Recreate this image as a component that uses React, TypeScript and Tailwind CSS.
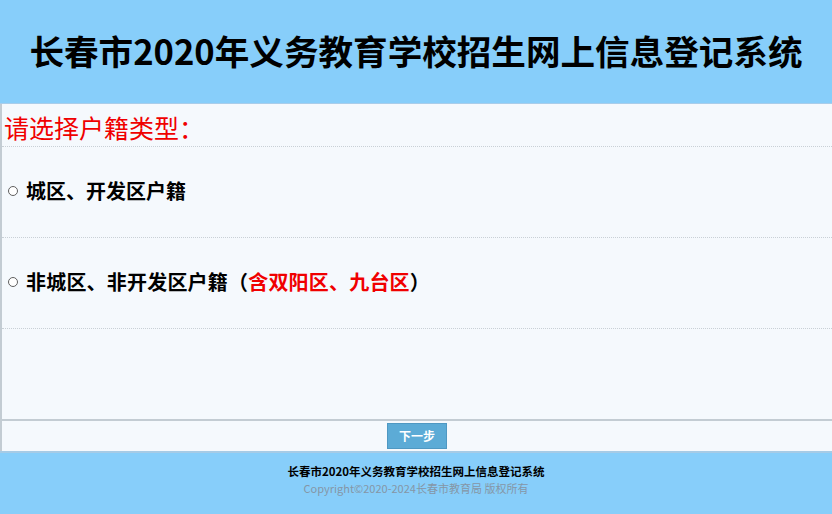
import React from 'react'

const font = { fontFamily: '"Noto Sans CJK SC", "Noto Sans", sans-serif' }

const Radio = () => <span className="inline-block h-[10px] w-[10px] shrink-0 rounded-full border border-[#5f5f5f] bg-white" />

export default function App() {
    return (
        <div className="flex h-[514px] w-[832px] flex-col overflow-hidden bg-[#f5f9fd] font-['Noto_Sans_CJK_SC',sans-serif]">
            <header className="flex h-[104px] shrink-0 items-center justify-center border-b border-[#a9cdea] bg-[#87cefa] pb-[2px]">
                <h1 className="text-[34.6px] leading-none font-bold text-black">长春市2020年义务教育学校招生网上信息登记系统</h1>
            </header>

            <main className="flex flex-1 flex-col border-l-2 border-[#c3ccd3]">
                <div className="flex h-[43px] items-center border-b border-dotted border-[#c9d0d6] pl-[2px] pt-[4px]">
                    <span className="text-[25px] leading-none text-[#f00000]">请选择户籍类型：</span>
                </div>

                <label className="flex h-[91px] items-center gap-2 border-b border-dotted border-[#c9d0d6] pl-[6px] pb-[2px]">
                    <Radio />
                    <span className="text-[20px] leading-none font-bold text-black">城区、开发区户籍</span>
                </label>

                <label className="flex h-[91px] items-center gap-2 border-b border-dotted border-[#c9d0d6] pl-[6px] pb-[2px]">
                    <Radio />
                    <span className="text-[20px] leading-none font-bold tracking-[0.2px] text-black">
                        非城区、非开发区户籍（<span className="text-[#f00000]">含双阳区、九台区</span>）
                    </span>
                </label>

                <div className="flex-1 border-b-2 border-[#c3ccd3]" />

                <div className="flex h-[30px] items-start justify-center pt-[2px]">
                    <button className="flex h-[26px] w-[60px] items-center justify-center border border-[#4f98c2] bg-[#5cabd6] text-[12px] font-bold text-white">下一步</button>
                </div>
            </main>

            <footer className="flex h-[63px] shrink-0 flex-col items-center border-t-2 border-[#a6cbe6] bg-[#87cefa] pt-[10px]" style={font}>
                <div className="text-[11.5px] leading-[17px] font-bold text-black">长春市2020年义务教育学校招生网上信息登记系统</div>
                <div className="text-[11px] leading-[16px] text-[#8596a6]">Copyright©2020-2024长春市教育局 版权所有</div>
            </footer>
        </div>
    )
}
